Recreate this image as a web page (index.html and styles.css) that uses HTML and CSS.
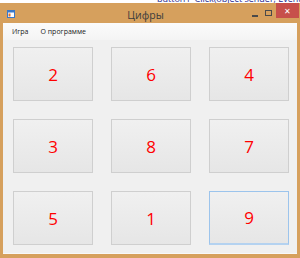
FILE: index.html
```html
<!DOCTYPE html>
<html lang="ru">
<head>
    <meta charset="UTF-8">
    <title>Цифры</title>
    <link rel="stylesheet" href="styles.css">
</head>
<body>
    <div class="desk-strip">
        <span class="strip-sep"></span>
        <span class="strip-icon"></span>
        <span class="strip-text">button1_Click(object sender, EventArgs e)</span>
    </div>

    <div class="window">
        <div class="titlebar">
            <svg class="app-icon" width="8" height="8" viewBox="0 0 8 8">
                <rect x="0.5" y="0.5" width="7" height="7" fill="#fff" stroke="#3a78c8"/>
                <rect x="0.5" y="0.5" width="7" height="2" fill="#3a78c8"/>
                <rect x="1.5" y="3.5" width="2" height="3" fill="#e0702c"/>
            </svg>
            <div class="title">Цифры</div>
            <div class="caption-buttons">
                <span class="cap-min"></span>
                <span class="cap-max"></span>
                <span class="cap-close">✕</span>
            </div>
        </div>

        <div class="menubar">
            <span class="menu-item">Игра</span>
            <span class="menu-item">О программе</span>
        </div>

        <div class="client">
            <button class="digit-btn">2</button>
            <button class="digit-btn">6</button>
            <button class="digit-btn">4</button>
            <button class="digit-btn">3</button>
            <button class="digit-btn">8</button>
            <button class="digit-btn">7</button>
            <button class="digit-btn">5</button>
            <button class="digit-btn">1</button>
            <button class="digit-btn focused">9</button>
        </div>
    </div>
</body>
</html>
```

FILE: styles.css
```css
* {
    margin: 0;
    padding: 0;
    box-sizing: border-box;
}

body {
    width: 300px;
    height: 258px;
    overflow: hidden;
    background: #d6a05d;
    font-family: "Open Sans", "Noto Sans", sans-serif;
}

.desk-strip {
    height: 3px;
    background: #fff;
    display: flex;
    align-items: flex-end;
    overflow: hidden;
    font-size: 9px;
    line-height: 9px;
    color: #1e1e8c;
}

.strip-sep {
    width: 1px;
    height: 9px;
    margin-left: 147px;
    background: #c8c8c8;
}

.strip-icon {
    width: 6px;
    height: 6px;
    margin-left: 6px;
    border-radius: 50%;
    background: #8a5fb4;
}

.strip-text {
    margin-left: 4px;
    white-space: nowrap;
}

.window {
    padding: 0 3px 5px;
}

.titlebar {
    height: 20px;
    display: flex;
    align-items: center;
}

.app-icon {
    margin-left: 4px;
    margin-top: 2px;
}

.title {
    flex: 1;
    text-align: center;
    font-size: 10.5px;
    color: #3c3c3c;
    margin-left: 24px;
    margin-top: 3px;
}

.caption-buttons {
    display: flex;
    align-items: flex-start;
    height: 100%;
}

.cap-min {
    width: 6px;
    height: 2px;
    background: #4a4a4a;
    margin-top: 12px;
    margin-right: 7px;
}

.cap-max {
    width: 7px;
    height: 6px;
    border: 1px solid #4a4a4a;
    margin-top: 7px;
    margin-right: 4px;
}

.cap-close {
    width: 23px;
    height: 15px;
    margin-right: -2px;
    background: #c7504b;
    color: #fff;
    font-size: 8px;
    line-height: 15px;
    text-align: center;
}

.menubar {
    height: 17px;
    background: linear-gradient(#fbfbfb, #f4f4f4);
    display: flex;
    align-items: center;
    padding-left: 9px;
    gap: 12px;
    font-size: 7px;
    color: #1a1a1a;
}

.client {
    background: #f0f0f0;
    padding: 7px 8px 8px 10px;
    display: grid;
    grid-template-columns: repeat(3, 80px);
    grid-template-rows: repeat(3, 54px);
    column-gap: 18px;
    row-gap: 18px;
    border-bottom: 1px solid #f8f8f8;
}

.digit-btn {
    border: 1px solid #cfcfcf;
    background: linear-gradient(#f0f0f0, #e6e6e6);
    color: #ff0000;
    font-family: "Open Sans", "Noto Sans", sans-serif;
    font-size: 17px;
}

.digit-btn.focused {
    border-color: #9cc4ec;
    border-bottom: 2px solid #b4d2f0;
}
```
